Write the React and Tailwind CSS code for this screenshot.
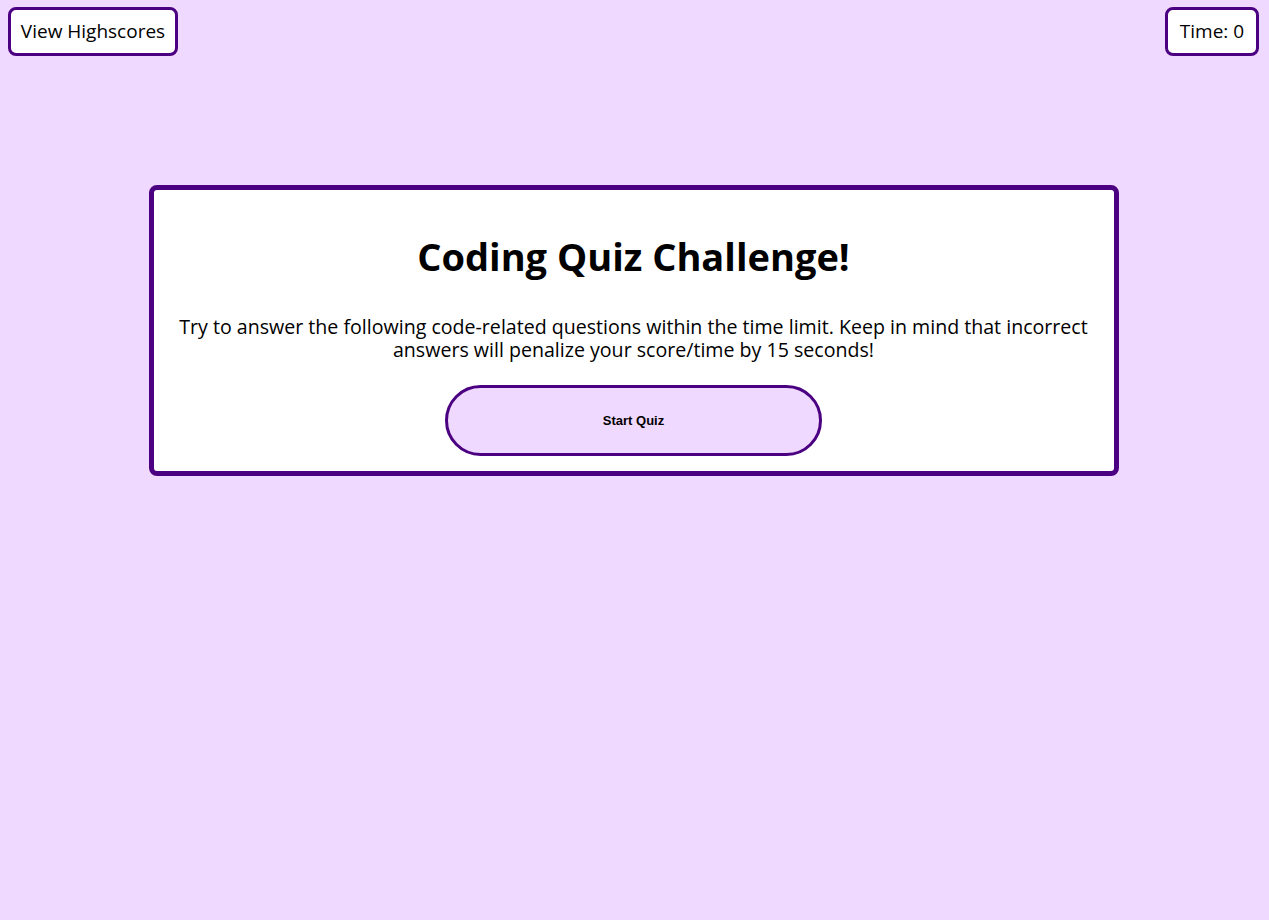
export default function App() {
  return (
    <div className="min-h-[920px] w-full bg-[#f0d9fe] font-['Open_Sans',sans-serif] text-black">
      {/* top bar */}
      <header className="flex items-start justify-between pr-[10px] pl-2 pt-[7px]">
        <button className="h-[49px] w-[170px] rounded-lg border-[3px] border-[#4b0082] bg-white text-[19px]">
          View Highscores
        </button>
        <div className="flex h-[49px] w-[94px] items-center justify-center rounded-lg border-[3px] border-[#4b0082] bg-white text-[19px]">
          Time: 0
        </div>
      </header>

      {/* intro card */}
      <main className="mx-auto mt-[129px] flex w-[970px] -translate-x-[1px] flex-col items-center rounded-lg border-[5px] border-[#4b0082] bg-white px-5 pt-[44px] pb-[15px] text-center">
        <h1 className="text-[38px] leading-[44px] font-bold">Coding Quiz Challenge!</h1>
        <p className="mt-[37px] text-[19.6px] leading-[23px]">
          Try to answer the following code-related questions within the time limit. Keep in mind that incorrect answers will penalize your score/time by 15 seconds!
        </p>
        <button className="mt-[24px] h-[71px] w-[377px] rounded-full border-[3px] border-[#4b0082] bg-[#f0d9fe] font-['Liberation_Sans',sans-serif] text-[13px] font-bold">
          Start Quiz
        </button>
      </main>
    </div>
  )
}
